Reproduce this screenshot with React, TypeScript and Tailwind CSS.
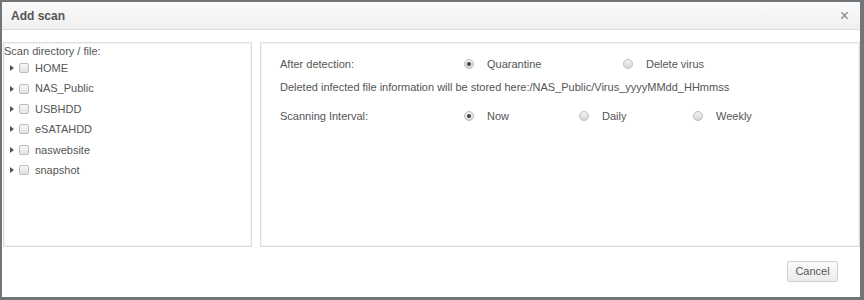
import React from "react";

const folders = ["HOME", "NAS_Public", "USBHDD", "eSATAHDD", "naswebsite", "snapshot"];

function Radio({ checked }: { checked?: boolean }) {
  return (
    <span className="inline-flex items-center justify-center w-[10px] h-[10px] rounded-full border border-[#bcbcbc] bg-gradient-to-b from-[#f4f4f4] to-[#d6d6d6]">
      {checked && <span className="w-[4px] h-[4px] rounded-full bg-[#444]" />}
    </span>
  );
}

function RadioOpt({ checked, label, w }: { checked?: boolean; label: string; w: string }) {
  return (
    <div className={`flex items-center ${w}`}>
      <Radio checked={checked} />
      <span className="ml-[13px]">{label}</span>
    </div>
  );
}

export default function App() {
  return (
    <div
      className="w-[864px] h-[300px] bg-[#6f7579] pt-[2px] pl-[2px] pr-[4px] pb-[3px]"
      style={{ fontFamily: '"Liberation Sans", Arial, sans-serif' }}
    >
      <div className="h-full bg-white flex flex-col text-[11px] text-[#555]">
        {/* header */}
        <div className="h-[28px] flex items-center justify-between pl-[9px] pr-[11px] bg-gradient-to-b from-[#fafafa] to-[#f0f0f0] border-b border-[#dcdcdc]">
          <span className="font-bold text-[12px] text-[#555]">Add scan</span>
          <span className="text-[16px] text-[#888] leading-none">×</span>
        </div>

        <div className="flex mt-[12px] h-[205px]">
          {/* left tree */}
          <div className="ml-[1px] w-[249px] border border-[#dedede] shadow-[inset_0_0_0_1px_#f3f3f3]">
            <div className="leading-[14px] mt-[1px]">Scan directory / file:</div>
            <div className="flex flex-col">
              {folders.map((f) => (
                <div key={f} className="flex items-center h-[20.4px] pl-[6px]">
                  <span className="w-0 h-0 border-y-[3.5px] border-y-transparent border-l-[4px] border-l-[#555] mr-[5px]" />
                  <span className="w-[10px] h-[10px] rounded-[2px] border border-[#bdbdbd] bg-gradient-to-b from-[#f7f7f7] to-[#e3e3e3]" />
                  <span className="ml-[6px]">{f}</span>
                </div>
              ))}
            </div>
          </div>

          {/* right options */}
          <div className="ml-[8px] w-[600px] border border-[#dedede] shadow-[inset_0_0_0_1px_#f3f3f3] pl-[19px] pt-[13px]">
            <div className="flex items-center h-[16px]">
              <span className="w-[184px]">After detection:</span>
              <RadioOpt checked label="Quarantine" w="w-[159px]" />
              <RadioOpt label="Delete virus" w="w-[120px]" />
            </div>
            <div className="mt-[7px] h-[16px] leading-[16px]">
              Deleted infected file information will be stored here:/NAS_Public/Virus_yyyyMMdd_HHmmss
            </div>
            <div className="flex items-center h-[16px] mt-[13px]">
              <span className="w-[184px]">Scanning Interval:</span>
              <RadioOpt checked label="Now" w="w-[115px]" />
              <RadioOpt label="Daily" w="w-[114px]" />
              <RadioOpt label="Weekly" w="w-[100px]" />
            </div>
          </div>
        </div>

        {/* footer */}
        <div className="flex justify-end pr-[22px] mt-[14px]">
          <button className="w-[51px] h-[21px] rounded-[2px] border border-[#d0d0d0] bg-gradient-to-b from-[#fbfbfb] to-[#ececec] text-[11px] text-[#555]">
            Cancel
          </button>
        </div>
      </div>
    </div>
  );
}
